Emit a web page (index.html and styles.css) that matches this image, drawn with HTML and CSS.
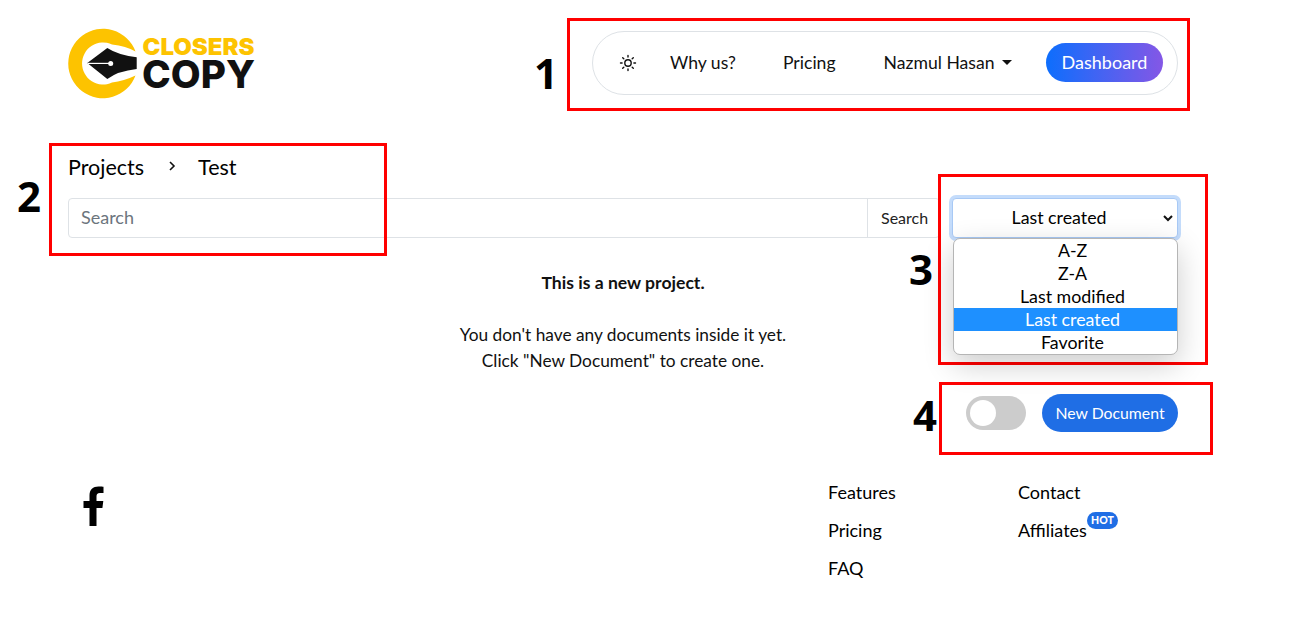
FILE: index.html
```html
<!DOCTYPE html>
<html lang="en">
<head>
<meta charset="utf-8">
<title>Closers Copy</title>
<link rel="stylesheet" href="styles.css">
</head>
<body>
<div class="page">
  <header class="header">
    <svg class="logo" width="200" height="72" viewBox="0 0 200 72" aria-label="Closers Copy">
      <path fill="#fdc300" d="M67.500 23.500A34.700 34.700 0 1 0 67.500 47.500Q56 53 44 54.500A21 21 0 1 1 44 16.500Q58 18 67.500 23.500Z"/>
      <path fill="#111" d="M19.300 35 39.300 20Q50 27 68.700 29.300V41Q50 43 39.300 51Z"/>
      <path stroke="#fff" stroke-width="1.200" fill="none" d="M20 35.400H42"/>
      <circle cx="42.700" cy="35.500" r="2.500" fill="#fff"/>
      <text class="logo-top" x="74.500" y="27" textLength="112" lengthAdjust="spacingAndGlyphs">CLOSERS</text>
      <text class="logo-bottom" x="74" y="60" textLength="113" lengthAdjust="spacingAndGlyphs">COPY</text>
    </svg>
    <nav class="nav">
      <svg class="sun" width="18" height="18" viewBox="0 0 18 18" fill="none" stroke="#111" stroke-width="1.400" stroke-linecap="round">
        <circle cx="9" cy="9" r="3.200"/>
        <path d="M9 1.500v1.600M9 14.900v1.600M1.500 9h1.600M14.900 9h1.600M3.700 3.700l1.100 1.100M13.200 13.200l1.100 1.100M3.700 14.300l1.100-1.100M13.200 4.800l1.100-1.100"/>
      </svg>
      <a class="nav-link why">Why us?</a>
      <a class="nav-link pricing">Pricing</a>
      <a class="nav-link user">Nazmul Hasan<span class="caret"></span></a>
      <a class="dash">Dashboard</a>
    </nav>
  </header>

  <main>
    <div class="crumbs">
      <span>Projects</span>
      <svg class="chev" width="8" height="10" viewBox="0 0 8 10" fill="none" stroke="#111" stroke-width="1.600"><path d="M2 1l4 4-4 4"/></svg>
      <span>Test</span>
    </div>
    <div class="toolbar">
      <div class="search">
        <span class="search-input">Search</span>
        <span class="search-btn">Search</span>
      </div>
      <div class="sort">
        <div class="select">
          <span class="select-label">Last created</span>
          <svg class="select-arrow" width="10" height="7" viewBox="0 0 10 7" fill="none" stroke="#111" stroke-width="2"><path d="M1 1l4 4 4-4"/></svg>
        </div>
        <ul class="menu">
          <li>A-Z</li>
          <li>Z-A</li>
          <li>Last modified</li>
          <li class="active">Last created</li>
          <li>Favorite</li>
        </ul>
      </div>
    </div>
    <section class="empty">
      <p class="empty-title">This is a new project.</p>
      <p class="empty-text">You don't have any documents inside it yet.<br>Click "New Document" to create one.</p>
    </section>
    <div class="actions">
      <span class="toggle"><span class="knob"></span></span>
      <a class="new-doc">New Document</a>
    </div>
  </main>

  <footer class="footer">
    <svg class="fb" width="24" height="40" viewBox="0 0 24 40"><path fill="#000" d="M7.500 40V22H1.500V15H7.500V9.500C7.500 3.500 11 .5 16.500.5c2.500 0 4.500.2 5 .3V7h-3.500c-2.800 0-3.500 1.400-3.500 3.400V15h6.800l-.9 7H14.500V40Z"/></svg>
    <div class="links">
      <a>Features</a><a>Contact</a>
      <a>Pricing</a><a class="aff">Affiliates<span class="hot">HOT</span></a>
      <a>FAQ</a>
    </div>
  </footer>
</div>

<div class="mark m1"></div><span class="num n1">1</span>
<div class="mark m2"></div><span class="num n2">2</span>
<div class="mark m3"></div><span class="num n3">3</span>
<div class="mark m4"></div><span class="num n4">4</span>
</body>
</html>
```

FILE: styles.css
```css
* { box-sizing: border-box; }
html, body { margin: 0; height: 640px; overflow: hidden; }
body { background: #fff; color: #000; font-family: Lato, "Liberation Sans", sans-serif; font-size: 18px; }
.page { width: 1110px; margin-left: 68px; }

.header { display: flex; justify-content: space-between; align-items: flex-start; padding-top: 28px; height: 155px; }
.logo { display: block; }
.logo-top { font: 900 23px Inter, sans-serif; fill: #fdc300; }
.logo-bottom { font: 800 38.500px Inter, sans-serif; fill: #111; }

.nav { display: flex; align-items: center; width: 586px; height: 64px; margin-top: 3px; padding: 0 14px 2px 26px; border: 1px solid #dee2e6; border-radius: 32px; font-size: 17.600px; }
.sun { flex: none; margin-top: 2px; }
.nav-link { color: #111; }
.why { margin-left: 33px; }
.pricing { margin-left: 47px; }
.user { margin-left: 48px; display: flex; align-items: center; }
.caret { width: 0; height: 0; margin-left: 7px; border: 5.500px solid transparent; border-top-color: #111; border-bottom: 0; }
.dash { margin-left: auto; width: 117px; height: 39px; line-height: 39px; text-align: center; color: #fff; border-radius: 20px; font-size: 18px; background: linear-gradient(90deg, #0d6efd, #8457e6); }

.crumbs { display: flex; align-items: center; height: 25px; padding-bottom: 2px; font-size: 21.500px; }
.chev { margin: -2px 22px 0 24px; }

.toolbar { display: flex; justify-content: space-between; margin-top: 18px; }
.search { display: flex; width: 872px; height: 40px; border: 1px solid #dee2e6; border-radius: 4px; }
.search-input { flex: 1; padding-left: 12px; line-height: 36px; color: #6c757d; font-size: 18px; }
.search-btn { width: 72px; padding-left: 13px; border-left: 1px solid #dee2e6; line-height: 38px; font-size: 16px; color: #222; }
.sort { position: relative; width: 226px; }
.select { display: flex; align-items: center; height: 40px; padding: 0 4px 2px 0; background: #fff; border: 1px solid #a8c9f5; border-radius: 4px; box-shadow: 0 0 0 3px #c4dcfb; }
.select-label { flex: 1; text-align: center; padding-left: 2px; font-size: 17.800px; }
.select-arrow { flex: none; margin-top: 2px; }
.menu { position: absolute; z-index: 2; top: 40px; left: 1px; right: 0; margin: 0; padding: 0 0 0 14px; list-style: none; text-align: center; background: #fff; border: 1px solid #b5b5b5; border-radius: 7px; overflow: hidden; box-shadow: 0 10px 30px rgba(0,0,0,.2); font-size: 17.800px; }
.menu li { height: 23px; line-height: 23px; }
.menu .active { margin-left: -14px; padding-left: 14px; background: #1e90ff; color: #fff; }

.empty { text-align: center; margin-top: 33px; height: 123px; color: #111; }
.empty p { margin: 0; }
.empty-title { font-weight: 700; height: 51px; line-height: 23px; font-size: 17.600px; }
.empty-text { line-height: 26px; font-size: 17.300px; }

.actions { display: flex; justify-content: flex-end; align-items: center; gap: 16px; height: 38px; }
.toggle { display: block; width: 60px; height: 34px; border-radius: 17px; background: #ccc; padding: 4px; }
.knob { display: block; width: 26px; height: 26px; border-radius: 50%; background: #fff; }
.new-doc { width: 136px; height: 38px; line-height: 38px; text-align: center; border-radius: 19px; background: #1f6ee5; color: #fff; font-size: 15.800px; }

.footer { display: flex; justify-content: space-between; margin-top: 41px; }
.fb { margin: 13px 0 0 14px; }
.links { display: grid; grid-template-columns: 190px 160px; grid-auto-rows: 38px; line-height: 38px; }
.aff { position: relative; }
.hot { position: absolute; left: 69px; top: 1px; width: 31px; height: 17px; line-height: 17px; text-align: center; border-radius: 9px; background: #1f6ee5; color: #fff; font-size: 10.500px; font-weight: 900; }

.mark { position: absolute; border: 3px solid #f00; }
.m1 { left: 567px; top: 18px; width: 623px; height: 93px; }
.m2 { left: 49px; top: 143px; width: 338px; height: 113px; }
.m3 { left: 938px; top: 174px; width: 270px; height: 191px; }
.m4 { left: 939px; top: 382px; width: 274px; height: 73px; }
.num { position: absolute; font: 700 42px/1 "Open Sans", sans-serif; color: #000; }
.n1 { left: 534px; top: 52px; }
.n2 { left: 17px; top: 175px; }
.n3 { left: 909px; top: 248px; }
.n4 { left: 913px; top: 394px; }
```
